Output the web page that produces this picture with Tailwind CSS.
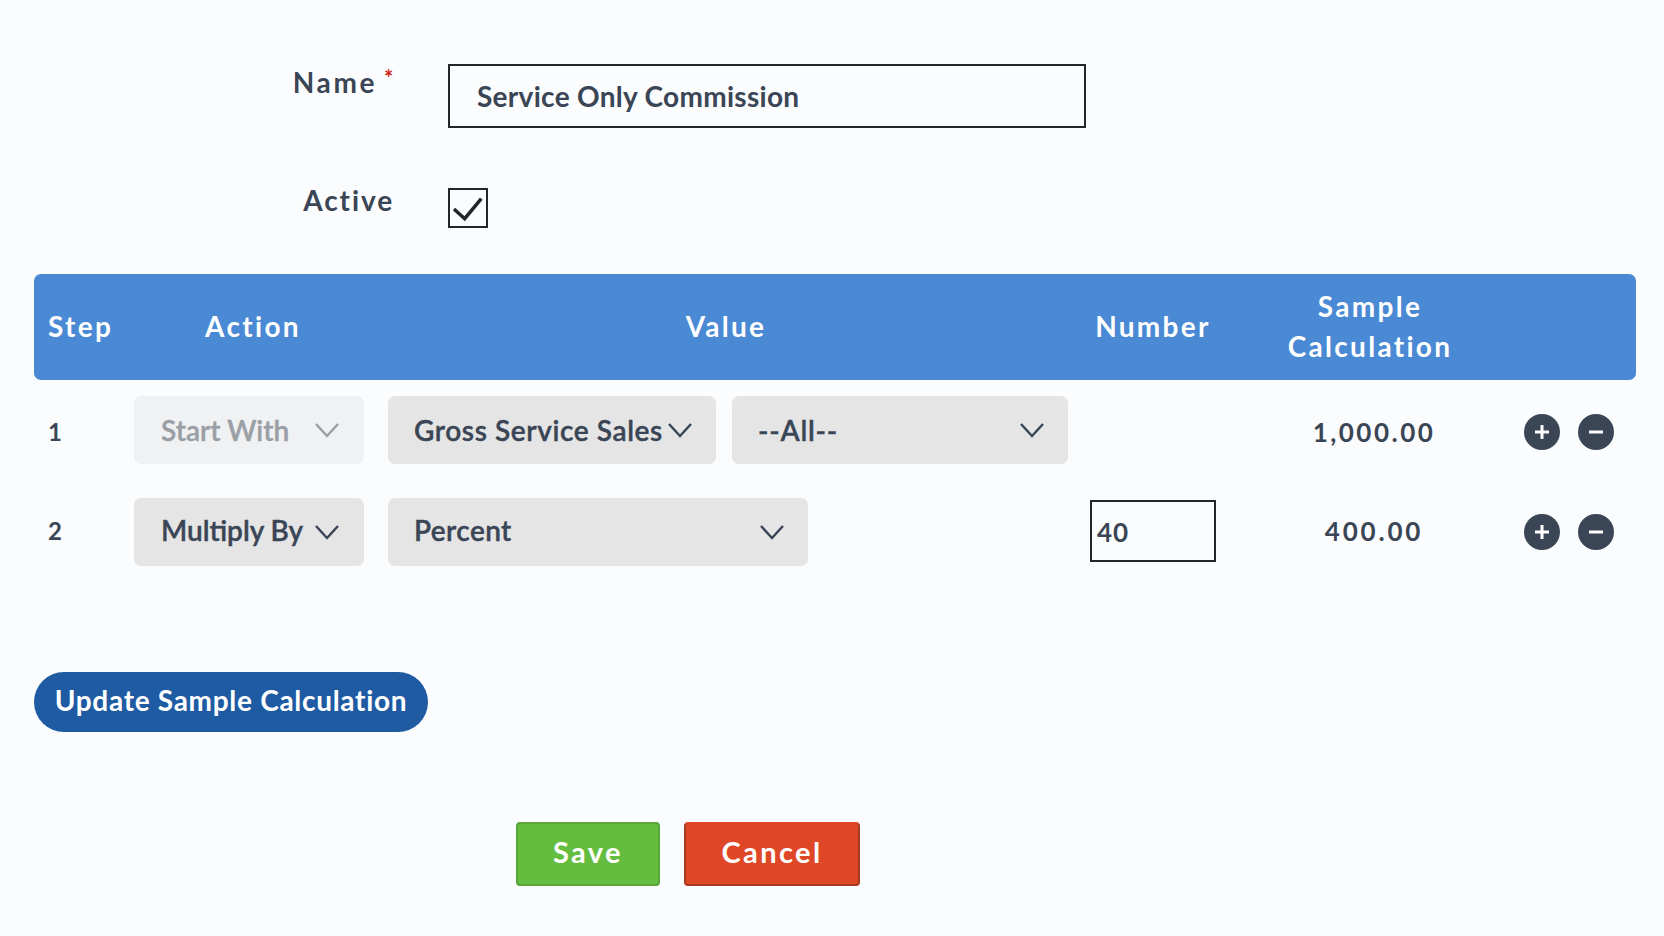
<!DOCTYPE html>
<html lang="en">
<head>
  <meta charset="UTF-8" />
  <title>Commission</title>
  <script src="https://cdn.jsdelivr.net/npm/@tailwindcss/browser@4"></script>
</head>
<body class="bg-[#fbfcfe] text-[#3a4555] font-['Lato','Open_Sans',sans-serif] h-[936px] overflow-hidden">
  <div class="pt-[64px] pl-[34px] pr-[28px]">
    <!-- Name / Active -->
    <div class="flex">
      <label class="w-[362px] h-[64px] pt-[1px] flex justify-end items-start text-[28px] font-bold tracking-[2.6px] leading-[34px]">Name<span class="text-[#cc2211] text-[22px] leading-[26px] ml-[7px]">*</span></label>
      <input type="text" value="Service Only Commission" class="ml-[52px] w-[638px] h-[64px] border-2 border-[#24262e] px-[27px] text-[28px] tracking-[0.3px] font-bold text-[#3a4555] outline-none" />
    </div>
    <div class="flex mt-[60px]">
      <label class="w-[360px] text-right text-[28px] font-bold tracking-[1.9px] leading-[24px]">Active</label>
      <div class="ml-[54px] w-[40px] h-[40px] border-2 border-[#24262e]">
        <svg width="36" height="36" viewBox="0 0 36 36" fill="none" stroke="#24262e" stroke-width="3.5"><polyline points="4,19 14.7,28.7 31.3,8.7" /></svg>
      </div>
    </div>

    <!-- Table header -->
    <div class="mt-[46px] h-[106px] pb-[2px] bg-[#4a89d3] rounded-[7px] flex items-center text-white text-[28px] font-bold tracking-[2.3px]">
      <div class="w-[100px] pl-[14px]">Step</div>
      <div class="w-[238px] text-center">Action</div>
      <div class="w-[708px] text-center">Value</div>
      <div class="w-[146px] text-center">Number</div>
      <div class="w-[288px] text-center leading-[40px]">Sample<br />Calculation</div>
    </div>

    <!-- Step 1 -->
    <div class="mt-[16px] h-[68px] flex items-center">
      <div class="w-[100px] pl-[14px] pt-[4px] text-[24px] font-bold">1</div>
      <div class="relative w-[230px]">
        <select disabled class="appearance-none w-full h-[68px] rounded-[7px] bg-[#f0f1f2] text-[#9a9fa6] pl-[27px] text-[28px] font-semibold [-webkit-text-stroke:0.4px] opacity-100"><option>Start With</option></select>
        <svg class="absolute right-[24px] top-[26px]" width="26" height="16" viewBox="0 0 26 16" fill="none" stroke="#9a9fa6" stroke-width="2.5"><polyline points="2,2 13,14 24,2" /></svg>
      </div>
      <div class="relative w-[328px] ml-[24px]">
        <select class="appearance-none w-full h-[68px] rounded-[7px] bg-[#e5e5e5] pl-[26px] text-[28px] font-semibold tracking-[0.6px] [-webkit-text-stroke:0.4px]"><option>Gross Service Sales</option></select>
        <svg class="absolute right-[23px] top-[26px]" width="26" height="16" viewBox="0 0 26 16" fill="none" stroke="#3a4555" stroke-width="2.5"><polyline points="2,2 13,14 24,2" /></svg>
      </div>
      <div class="relative w-[336px] ml-[16px]">
        <select class="appearance-none w-full h-[68px] rounded-[7px] bg-[#e5e5e5] pl-[26px] text-[28px] font-semibold tracking-[0.8px] [-webkit-text-stroke:0.4px]"><option>--All--</option></select>
        <svg class="absolute right-[23px] top-[26px]" width="26" height="16" viewBox="0 0 26 16" fill="none" stroke="#3a4555" stroke-width="2.5"><polyline points="2,2 13,14 24,2" /></svg>
      </div>
      <div class="w-[126px] ml-[22px]"></div>
      <div class="w-[300px] ml-[8px] pt-[4px] text-center text-[26px] font-bold tracking-[2.5px]">1,000.00</div>
      <div class="flex gap-[18px] pt-[4px]">
        <div class="w-[36px] h-[36px] rounded-full bg-[#3a4555] flex items-center justify-center">
          <svg width="16" height="16" viewBox="0 0 16 16" stroke="#fff" stroke-width="3"><path d="M8 1v14M1 8h14" /></svg>
        </div>
        <div class="w-[36px] h-[36px] rounded-full bg-[#3a4555] flex items-center justify-center">
          <svg width="16" height="16" viewBox="0 0 16 16" stroke="#fff" stroke-width="3"><path d="M1 8h14" /></svg>
        </div>
      </div>
    </div>

    <!-- Step 2 -->
    <div class="mt-[34px] h-[68px] flex items-center">
      <div class="w-[100px] pl-[14px] pb-[2px] text-[24px] font-bold">2</div>
      <div class="relative w-[230px]">
        <select class="appearance-none w-full h-[68px] rounded-[7px] bg-[#e5e5e5] pl-[27px] pb-[4px] text-[28px] font-semibold [-webkit-text-stroke:0.4px]"><option>Multiply By</option></select>
        <svg class="absolute right-[24px] top-[26px]" width="26" height="16" viewBox="0 0 26 16" fill="none" stroke="#3a4555" stroke-width="2.5"><polyline points="2,2 13,14 24,2" /></svg>
      </div>
      <div class="relative w-[420px] ml-[24px]">
        <select class="appearance-none w-full h-[68px] rounded-[7px] bg-[#e5e5e5] pl-[26px] pb-[4px] text-[28px] font-semibold tracking-[0.4px] [-webkit-text-stroke:0.4px]"><option>Percent</option></select>
        <svg class="absolute right-[23px] top-[26px]" width="26" height="16" viewBox="0 0 26 16" fill="none" stroke="#3a4555" stroke-width="2.5"><polyline points="2,2 13,14 24,2" /></svg>
      </div>
      <input type="text" value="40" class="ml-[282px] w-[126px] h-[62px] -mt-[2px] border-2 border-[#24262e] px-[5px] pt-[2px] text-[26px] tracking-[1px] font-bold text-[#3a4555] outline-none" />
      <div class="w-[300px] ml-[8px] pb-[2px] text-center text-[26px] font-bold tracking-[2.8px]">400.00</div>
      <div class="flex gap-[18px]">
        <div class="w-[36px] h-[36px] rounded-full bg-[#3a4555] flex items-center justify-center">
          <svg width="16" height="16" viewBox="0 0 16 16" stroke="#fff" stroke-width="3"><path d="M8 1v14M1 8h14" /></svg>
        </div>
        <div class="w-[36px] h-[36px] rounded-full bg-[#3a4555] flex items-center justify-center">
          <svg width="16" height="16" viewBox="0 0 16 16" stroke="#fff" stroke-width="3"><path d="M1 8h14" /></svg>
        </div>
      </div>
    </div>

    <button class="mt-[106px] block w-[394px] h-[60px] pb-[4px] rounded-full bg-[#1f5ba3] text-white text-[28px] tracking-[0.7px] font-bold">Update Sample Calculation</button>

    <div class="mt-[90px] ml-[482px] flex gap-[24px]">
      <button class="w-[144px] h-[64px] pb-[4px] rounded-[4px] bg-[#64bd3e] border-2 border-[#5aa53a] text-white text-[29px] font-bold tracking-[2.4px]">Save</button>
      <button class="w-[176px] h-[64px] pb-[4px] rounded-[4px] bg-[#df4826] border-2 border-t-[#df4826] border-[#a63a20] text-white text-[29px] font-bold tracking-[2.4px]">Cancel</button>
    </div>
  </div>
</body>
</html>
